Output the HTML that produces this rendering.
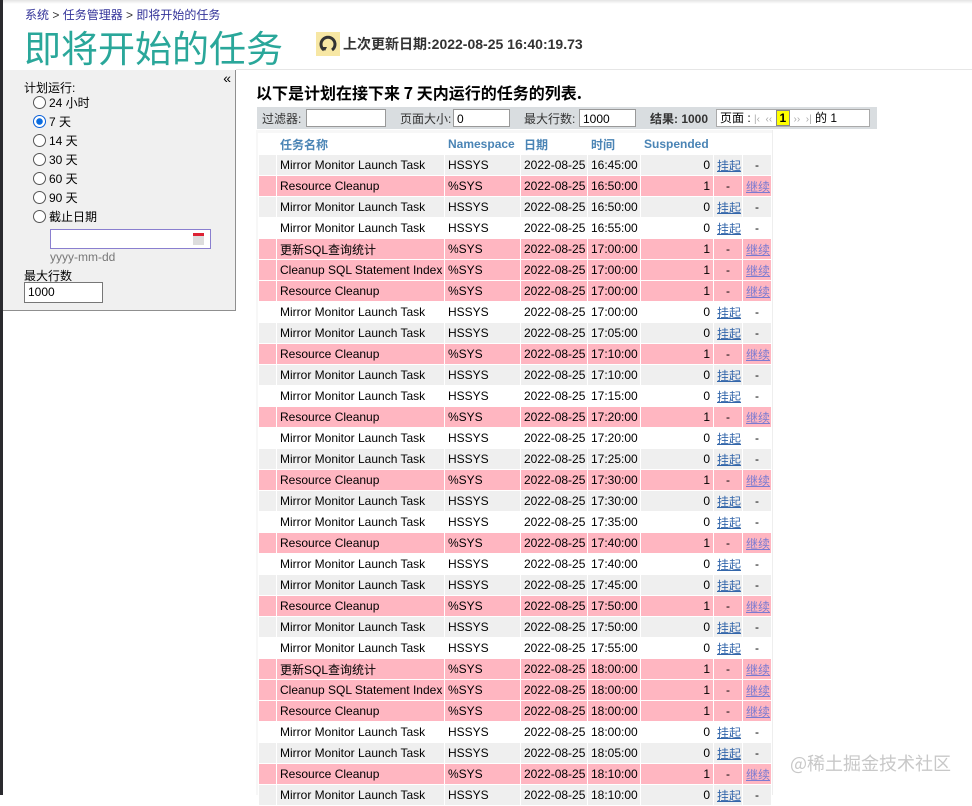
<!DOCTYPE html>
<html><head><meta charset="utf-8">
<style>
*{box-sizing:border-box}
body{margin:0;width:972px;height:795px;overflow:hidden;background:#fff;font-family:"Liberation Sans","Noto Sans CJK SC",sans-serif;font-size:12px;color:#000;position:relative}
.strip{position:absolute;left:0;top:0;width:3px;height:795px;background:#2a2a2e}
.topline{position:absolute;left:3px;top:0;width:969px;height:4px;background:linear-gradient(#e4e4e4,#fff)}
.crumb{position:absolute;left:25px;top:6px;font-size:12px;color:#333399}
.crumb span{color:#333}
.title{position:absolute;left:24px;top:22px;font-size:37px;color:#2aa79a;letter-spacing:0px;font-family:"Noto Sans CJK SC",sans-serif;line-height:48px}
.upd{position:absolute;left:316px;top:31px;font-size:14px;color:#333;font-weight:bold;line-height:26px;display:flex;align-items:center}
.upd .ic{width:24px;height:24px;background:#f7e7a4;margin-right:3px;display:flex;align-items:center;justify-content:center}
.hline{position:absolute;left:236px;top:69px;width:736px;height:1px;background:#e6e6e6}
.panel{position:absolute;left:3px;top:70px;width:233px;height:241px;background:#f0f0f0;border:1px solid #8f8f8f;border-top:none;border-left:none}
.panel .lbl{position:absolute;left:21px;font-size:12px}
.radio{position:absolute;left:30px;display:flex;align-items:center;font-size:12px}
.radio i{display:inline-block;width:13px;height:13px;border:1px solid #555;border-radius:50%;background:#fff;margin-right:3px}
.radio i.on{border-color:#0a60d8;background:radial-gradient(circle,#0a6ce0 3px,#fff 3.5px)}
.date{position:absolute;left:47px;top:159px;width:161px;height:20px;border:1px solid #8a7fcf;background:#fff}
.cal{position:absolute;right:6px;top:3px;width:11px;height:12px;background:#ddd;border-top:3px solid #d23}
.inp{position:absolute;background:#fff;border:1px solid #777;font-size:12px;padding:1px 3px;line-height:16px}
h2{position:absolute;left:256px;top:80px;margin:0;font-size:16px;font-weight:bold;font-family:"Noto Sans CJK SC",sans-serif}
.bar{position:absolute;left:257px;top:107px;width:620px;height:22px;background:#d9dde0}
.bar .t{position:absolute;top:3px;font-size:12px;color:#333}
.bar .inp{top:2px;height:18px;border-color:#999}
.pager{position:absolute;left:459px;top:2px;width:154px;height:18px;background:#fff;border:1px solid #aaa;font-size:12px;padding-left:3px;line-height:16px;color:#000}
.pager .g{color:#aaa;font-size:10px}
.pager b{background:#ff0;border:1px solid #888;padding:0 3px}
.wrap{position:absolute;left:256px;top:130px;width:517px;height:665px;background:#f7f7f7;border-right:1px solid #eee}
table{position:absolute;left:2px;top:3px;width:513px;border-collapse:collapse;font-size:12px;table-layout:fixed}
td,th{height:21px;padding:0 3px;border:1px solid #fff;white-space:nowrap;text-align:left;overflow:hidden}
th{color:#4a84b5;font-weight:bold;background:#fff}
tr.g td{background:#efefef}
tr.w td{background:#fff}
tr.p td{background:#ffb6c1}
td.r{text-align:right}
td.c{text-align:center}
a{color:#3366aa;text-decoration:underline}
tr.p a{color:#7b7bd0}
.wm{position:absolute;left:790px;top:750px;font-size:18px;color:#c8c8c8;font-family:"Noto Sans CJK SC",sans-serif}
</style></head><body>
<div class="strip"></div><div class="topline"></div>
<div class="crumb">系统 <span>&gt;</span> 任务管理器 <span>&gt;</span> 即将开始的任务</div>
<div class="title">即将开始的任务</div>
<div class="upd"><div class="ic"><svg width="18" height="18" viewBox="0 0 18 18"><path d="M5 15 A7 7 0 1 1 13 15" fill="none" stroke="#333" stroke-width="3"/><path d="M3 12 L6 16 L8 12Z" fill="#333"/></svg></div>上次更新日期:2022-08-25 16:40:19.73</div>
<div class="hline"></div>
<div class="panel">
<div style="position:absolute;right:4px;top:0px;font-size:14px">«</div>
<div class="lbl" style="top:9px">计划运行:</div>
<div class="radio" style="top:24px"><i></i>24 小时</div>
<div class="radio" style="top:43px"><i class="on"></i>7 天</div>
<div class="radio" style="top:62px"><i></i>14 天</div>
<div class="radio" style="top:81px"><i></i>30 天</div>
<div class="radio" style="top:100px"><i></i>60 天</div>
<div class="radio" style="top:119px"><i></i>90 天</div>
<div class="radio" style="top:138px"><i></i>截止日期</div>
<div class="date"><div class="cal"></div></div>
<div style="position:absolute;left:47px;top:180px;color:#777">yyyy-mm-dd</div>
<div class="lbl" style="top:197px">最大行数</div>
<div class="inp" style="left:21px;top:212px;width:79px;height:21px">1000</div>
</div>
<h2>以下是计划在接下来 7 天内运行的任务的列表.</h2>
<div class="bar">
<span class="t" style="left:5px">过滤器:</span><div class="inp" style="left:49px;width:80px"></div>
<span class="t" style="left:143px">页面大小:</span><div class="inp" style="left:196px;width:57px">0</div>
<span class="t" style="left:267px">最大行数:</span><div class="inp" style="left:322px;width:57px">1000</div>
<span class="t" style="left:393px;font-weight:bold">结果: 1000</span>
<div class="pager">页面 : <span class="g">|‹ &nbsp;‹‹</span> <b>1</b> <span class="g">›› &nbsp;›|</span> 的 1</div>
</div>
<div class="wrap"><table>
<colgroup><col style="width:18px"><col style="width:168px"><col style="width:76px"><col style="width:67px"><col style="width:53px"><col style="width:73px"><col style="width:29px"><col style="width:29px"></colgroup>
<tr><th></th><th>任务名称</th><th>Namespace</th><th>日期</th><th>时间</th><th>Suspended</th><th></th><th></th></tr>
<script>
var rows=[["M","45"],["R","50"],["M","50"],["M","55"],["U","17:00"],["C","17:00"],["R","17:00"],["M","17:00"],["M","17:05"],["R","17:10"],["M","17:10"],["M","17:15"],["R","17:20"],["M","17:20"],["M","17:25"],["R","17:30"],["M","17:30"],["M","17:35"],["R","17:40"],["M","17:40"],["M","17:45"],["R","17:50"],["M","17:50"],["M","17:55"],["U","18:00"],["C","18:00"],["R","18:00"],["M","18:00"],["M","18:05"],["R","18:10"],["M","18:10"]];
var names={M:"Mirror Monitor Launch Task",R:"Resource Cleanup",U:"更新SQL查询统计",C:"Cleanup SQL Statement Index"};
var h="";
rows.forEach(function(r,i){var t=r[1].length==2?"16:"+r[1]:r[1];var s=r[0]!="M";var cls=s?"p":(i%2==0?"g":"w");
h+='<tr class="'+cls+'"><td></td><td>'+names[r[0]]+'</td><td>'+(s?"%SYS":"HSSYS")+'</td><td>2022-08-25</td><td>'+t+':00</td><td class="r">'+(s?1:0)+'</td><td class="c">'+(s?"-":'<a>挂起</a>')+'</td><td class="c">'+(s?'<a>继续</a>':"-")+'</td></tr>';});
document.write(h);
</script>
</table></div>
<div class="wm">@稀土掘金技术社区</div>
</body></html>
